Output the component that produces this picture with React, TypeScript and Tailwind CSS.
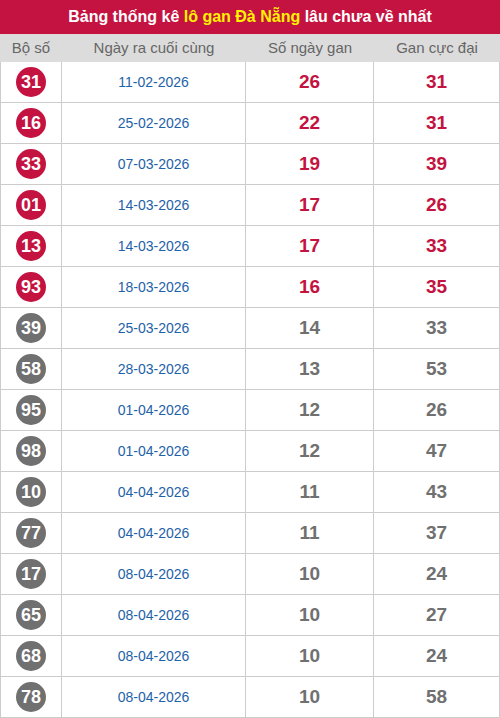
const rows = [
  { n: "31", d: "11-02-2026", g: 26, m: 31, hot: true },
  { n: "16", d: "25-02-2026", g: 22, m: 31, hot: true },
  { n: "33", d: "07-03-2026", g: 19, m: 39, hot: true },
  { n: "01", d: "14-03-2026", g: 17, m: 26, hot: true },
  { n: "13", d: "14-03-2026", g: 17, m: 33, hot: true },
  { n: "93", d: "18-03-2026", g: 16, m: 35, hot: true },
  { n: "39", d: "25-03-2026", g: 14, m: 33, hot: false },
  { n: "58", d: "28-03-2026", g: 13, m: 53, hot: false },
  { n: "95", d: "01-04-2026", g: 12, m: 26, hot: false },
  { n: "98", d: "01-04-2026", g: 12, m: 47, hot: false },
  { n: "10", d: "04-04-2026", g: 11, m: 43, hot: false },
  { n: "77", d: "04-04-2026", g: 11, m: 37, hot: false },
  { n: "17", d: "08-04-2026", g: 10, m: 24, hot: false },
  { n: "65", d: "08-04-2026", g: 10, m: 27, hot: false },
  { n: "68", d: "08-04-2026", g: 10, m: 24, hot: false },
  { n: "78", d: "08-04-2026", g: 10, m: 58, hot: false },
];

export default function App() {
  return (
    <div className="w-[500px] bg-white font-['Liberation_Sans',Arial,sans-serif]">
      <div className="flex h-[34px] items-center justify-center bg-[#c41340] text-[16px] font-bold text-white">
        Bảng thống kê&nbsp;<span className="text-[#fff200]">lô gan Đà Nẵng</span>&nbsp;lâu chưa về nhất
      </div>

      <div className="flex h-[28px] items-center bg-[#dcdcdc] text-[15px] text-[#666]">
        <div className="w-[62px] text-center">Bộ số</div>
        <div className="w-[184px] text-center">Ngày ra cuối cùng</div>
        <div className="w-[128px] text-center">Số ngày gan</div>
        <div className="w-[126px] text-center">Gan cực đại</div>
      </div>

      {rows.map((r, i) => (
        <div key={i} className="flex h-[41px] border-b border-[#ccc]">
          <div className="flex w-[62px] items-center justify-center border-x border-[#ccc]">
            <span
              className={
                "flex h-[30px] w-[30px] items-center justify-center rounded-full text-[18px] font-bold text-white " +
                (r.hot ? "bg-[#c41340]" : "bg-[#707070]")
              }
            >
              {r.n}
            </span>
          </div>
          <div className="flex w-[184px] items-center justify-center border-r border-[#ccc] text-[14px] text-[#1e62a8]">
            {r.d}
          </div>
          <div
            className={
              "flex w-[128px] items-center justify-center border-r border-[#ccc] text-[19px] font-bold " +
              (r.hot ? "text-[#c41340]" : "text-[#707070]")
            }
          >
            {r.g}
          </div>
          <div
            className={
              "flex w-[126px] items-center justify-center border-r border-[#ccc] text-[19px] font-bold " +
              (r.hot ? "text-[#c41340]" : "text-[#707070]")
            }
          >
            {r.m}
          </div>
        </div>
      ))}
    </div>
  );
}
